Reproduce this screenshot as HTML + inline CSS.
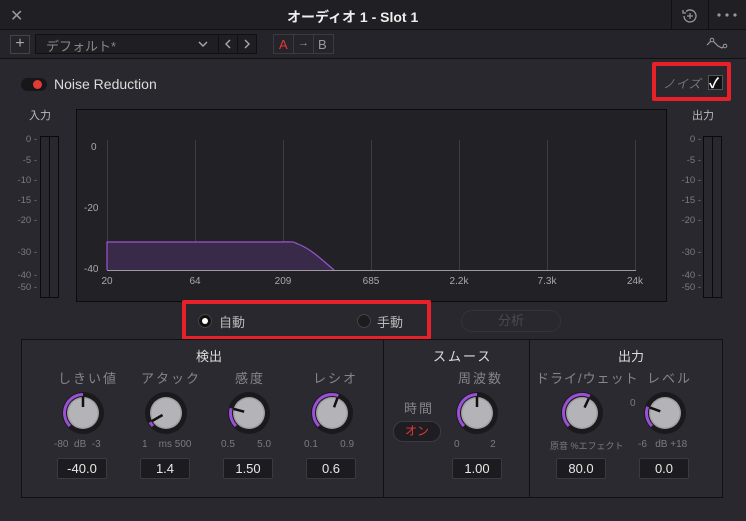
<!DOCTYPE html>
<html><head><meta charset="utf-8"><style>
*{margin:0;padding:0;box-sizing:border-box}
body{width:746px;height:521px;background:#28282e;font-family:"Liberation Sans","Noto Sans CJK JP",sans-serif;position:relative;overflow:hidden;color:#c8c8c8}
.a{position:absolute}
.t{position:absolute;white-space:nowrap}
.sm{font-size:10px;color:#7a7a80}
.vb{position:absolute;width:50px;height:21px;background:#1c1c20;border:1px solid #3a3a40;border-radius:2px;color:#e8e8e8;font-size:13px;text-align:center;line-height:19px}
.lbl{font-size:13px;color:#85858a;letter-spacing:2px}
</style></head><body>
<div class="a" style="left:0;top:0;width:746px;height:30px;background:#1f1f24;border-bottom:1px solid #111"></div>
<div class="t" style="left:10px;top:6px;font-size:16px;color:#999">✕</div>
<div class="t" style="left:287px;top:7px;font-size:14px;color:#eee;font-weight:bold">オーディオ 1 - Slot 1</div>
<div class="a" style="left:671px;top:0;width:1px;height:30px;background:#111"></div>
<div class="a" style="left:708px;top:0;width:1px;height:30px;background:#111"></div>
<svg class="a" style="left:680px;top:6px" width="20" height="20" viewBox="0 0 20 20"><path d="M4 10a6 6 0 1 0 2-4.5" fill="none" stroke="#999" stroke-width="1.3"/><path d="M3 4v3h3" fill="none" stroke="#999" stroke-width="1.3"/><path d="M10 7v6M7 10h6" stroke="#999" stroke-width="1.2"/></svg>
<svg class="a" style="left:716px;top:12px" width="22" height="6"><circle cx="3" cy="3" r="1.6" fill="#999"/><circle cx="11" cy="3" r="1.6" fill="#999"/><circle cx="19" cy="3" r="1.6" fill="#999"/></svg>
<div class="a" style="left:0;top:30px;width:746px;height:29px;background:#24242a;border-bottom:1px solid #111"></div>
<div class="a" style="left:10px;top:35px;width:20px;height:19px;border:1px solid #444;color:#aaa;font-size:16px;text-align:center;line-height:16px">+</div>
<div class="a" style="left:35px;top:34px;width:222px;height:20px;background:#1f1f23;border:1px solid #111"></div>
<div class="t" style="left:46px;top:36px;font-size:13px;color:#888">デフォルト*</div>
<svg class="a" style="left:197px;top:39px" width="12" height="10"><path d="M2 3l4 4 4-4" fill="none" stroke="#aaa" stroke-width="1.4"/></svg>
<div class="a" style="left:218px;top:34px;width:1px;height:20px;background:#111"></div>
<div class="a" style="left:237px;top:34px;width:1px;height:20px;background:#111"></div>
<svg class="a" style="left:222px;top:38px" width="12" height="12"><path d="M8 2l-4 4 4 4" fill="none" stroke="#aaa" stroke-width="1.4"/></svg>
<svg class="a" style="left:241px;top:38px" width="12" height="12"><path d="M4 2l4 4-4 4" fill="none" stroke="#aaa" stroke-width="1.4"/></svg>
<div class="a" style="left:273px;top:34px;width:61px;height:20px;border:1px solid #3a3a40"></div>
<div class="a" style="left:293px;top:34px;width:1px;height:20px;background:#3a3a40"></div>
<div class="a" style="left:313px;top:34px;width:1px;height:20px;background:#3a3a40"></div>
<div class="t" style="left:279px;top:37px;font-size:13px;color:#e53935">A</div>
<div class="t" style="left:298px;top:37px;font-size:11px;color:#999">→</div>
<div class="t" style="left:318px;top:37px;font-size:13px;color:#999">B</div>
<svg class="a" style="left:705px;top:36px" width="28" height="16"><path d="M2 9l5-5 6 6 4 2 4-4" fill="none" stroke="#999" stroke-width="1.2"/><circle cx="7" cy="4" r="1.8" fill="#24242a" stroke="#999"/><circle cx="20" cy="10" r="1.8" fill="#24242a" stroke="#999"/></svg>
<div class="a" style="left:21px;top:78px;width:26px;height:13px;border-radius:7px;background:#17171a"></div>
<div class="a" style="left:33px;top:80px;width:9px;height:9px;border-radius:50%;background:#e53935"></div>
<div class="t" style="left:54px;top:76px;font-size:14px;color:#ddd">Noise Reduction</div>
<div class="a" style="left:652px;top:62px;width:79px;height:39px;border:4px solid #e8202a;border-radius:2px"></div>
<div class="t" style="left:663px;top:75px;font-size:12px;color:#777;font-style:italic;letter-spacing:1px">ノイズ</div>
<div class="a" style="left:708px;top:75px;width:15px;height:15px;background:#111;border:1px solid #555"></div>
<div class="t" style="left:709px;top:73px;font-size:14px;color:#fff;font-weight:bold">✓</div>
<div class="t" style="left:29px;top:107px;font-size:11px;color:#bbb">入力</div>
<div class="t" style="left:692px;top:107px;font-size:11px;color:#bbb">出力</div>
<div class="a" style="left:40px;top:136px;width:19px;height:162px;border:1px solid #0a0a0a"></div>
<div class="a" style="left:49px;top:136px;width:1px;height:162px;background:#0a0a0a"></div>
<div class="a" style="left:703px;top:136px;width:19px;height:162px;border:1px solid #0a0a0a"></div>
<div class="a" style="left:712px;top:136px;width:1px;height:162px;background:#0a0a0a"></div>
<div class="a sm" style="left:0;top:130px;width:37px;text-align:right;line-height:20px;font-size:9.5px">
<div style="position:absolute;right:0;top:0">0 -</div><div style="position:absolute;right:0;top:21px">-5 -</div><div style="position:absolute;right:0;top:41px">-10 -</div><div style="position:absolute;right:0;top:61px">-15 -</div><div style="position:absolute;right:0;top:81px">-20 -</div><div style="position:absolute;right:0;top:113px">-30 -</div><div style="position:absolute;right:0;top:136px">-40 -</div><div style="position:absolute;right:0;top:148px">-50 -</div></div>
<div class="a sm" style="left:660px;top:130px;width:41px;text-align:right;line-height:20px;font-size:9.5px">
<div style="position:absolute;right:0;top:0">0 -</div><div style="position:absolute;right:0;top:21px">-5 -</div><div style="position:absolute;right:0;top:41px">-10 -</div><div style="position:absolute;right:0;top:61px">-15 -</div><div style="position:absolute;right:0;top:81px">-20 -</div><div style="position:absolute;right:0;top:113px">-30 -</div><div style="position:absolute;right:0;top:136px">-40 -</div><div style="position:absolute;right:0;top:148px">-50 -</div></div>
<svg class="a" style="left:76px;top:109px" width="591" height="193">
<rect x="0.5" y="0.5" width="590" height="192" fill="#212126" stroke="#0c0c0e"/>
<g stroke="#3c3c44" stroke-width="1"><line x1="31.5" y1="31" x2="31.5" y2="161"/><line x1="119.5" y1="31" x2="119.5" y2="161"/><line x1="207.5" y1="31" x2="207.5" y2="161"/><line x1="295.5" y1="31" x2="295.5" y2="161"/><line x1="383.5" y1="31" x2="383.5" y2="161"/><line x1="471.5" y1="31" x2="471.5" y2="161"/><line x1="559.5" y1="31" x2="559.5" y2="161"/></g>
<path d="M31 161V133H200C220 133 215 132 222 135C235 140 245 150 258 161Z" fill="#3a2a4a"/>
<path d="M31 161V133H200C220 133 215 132 222 135C235 140 245 150 258 161" fill="none" stroke="#9a55d0" stroke-width="1.2"/>
<line x1="31" y1="161.5" x2="560" y2="161.5" stroke="#9a9aa0"/>
<g font-size="10" fill="#aaa" font-family="Liberation Sans"><text x="15" y="41">0</text><text x="8" y="102">-20</text><text x="8" y="163">-40</text>
<text x="31" y="175" text-anchor="middle">20</text><text x="119" y="175" text-anchor="middle">64</text><text x="207" y="175" text-anchor="middle">209</text><text x="295" y="175" text-anchor="middle">685</text><text x="383" y="175" text-anchor="middle">2.2k</text><text x="471" y="175" text-anchor="middle">7.3k</text><text x="559" y="175" text-anchor="middle">24k</text></g>
</svg>
<div class="a" style="left:182px;top:300px;width:249px;height:40px;border:4px solid #e8202a;border-radius:2px"></div>
<div class="a" style="left:198px;top:314px;width:14px;height:14px;border-radius:50%;background:#111;border:1px solid #444"></div>
<div class="a" style="left:202px;top:318px;width:6px;height:6px;border-radius:50%;background:#fff"></div>
<div class="t" style="left:219px;top:312px;font-size:13px;color:#bbb">自動</div>
<div class="a" style="left:357px;top:314px;width:14px;height:14px;border-radius:50%;background:#1c1c1f;border:1px solid #444"></div>
<div class="t" style="left:377px;top:312px;font-size:13px;color:#bbb">手動</div>
<div class="a" style="left:461px;top:310px;width:100px;height:22px;border:1px solid #33333a;border-radius:11px;color:#4a4a50;font-size:13px;text-align:center;line-height:20px">分析</div>
<div class="a" style="left:21px;top:339px;width:702px;height:159px;border:1px solid #111;background:#2a2a30"></div>
<div class="a" style="left:383px;top:339px;width:1px;height:159px;background:#111"></div>
<div class="a" style="left:529px;top:339px;width:1px;height:159px;background:#111"></div>
<div class="t" style="left:196px;top:346px;font-size:13px;color:#ddd">検出</div>
<div class="t" style="left:433px;top:346px;font-size:13px;color:#ddd;letter-spacing:2px">スムース</div>
<div class="t" style="left:618px;top:346px;font-size:13px;color:#ddd">出力</div>
<div class="t lbl" style="left:58px;top:368px">しきい値</div>
<div class="t lbl" style="left:141px;top:368px">アタック</div>
<div class="t lbl" style="left:235px;top:368px">感度</div>
<div class="t lbl" style="left:313px;top:368px">レシオ</div>
<div class="t lbl" style="left:458px;top:368px">周波数</div>
<div class="t lbl" style="left:536px;top:368px;letter-spacing:1px">ドライ/ウェット</div>
<div class="t lbl" style="left:647px;top:368px">レベル</div>
<div class="t lbl" style="left:404px;top:398px">時間</div>
<div class="a" style="left:393px;top:421px;width:48px;height:21px;border-radius:10px;background:#1e1e22;border:1px solid #3a3a40;color:#e53935;font-size:12px;text-align:center;line-height:19px">オン</div>
<svg class="a" style="left:0;top:0" width="746" height="521">
<defs><g id="kb"><circle r="21" fill="#1a1a1d"/><circle r="16" fill="#a0a0a4"/><circle r="14.5" fill="#b4b4b8"/></g></defs>
<g transform="translate(83,413)"><use href="#kb"/><path d="M-13.08 13.08A18.5 18.5 0 0 1 0 -18.5" fill="none" stroke="#9b4fd6" stroke-width="3"/><line x1="0" y1="-6" x2="0" y2="-16" stroke="#111" stroke-width="2.5"/></g>
<g transform="translate(166,413)"><use href="#kb"/><path d="M-13.08 13.08A18.5 18.5 0 0 1 -16 9.25" fill="none" stroke="#9b4fd6" stroke-width="3"/><line x1="0" y1="-4" x2="0" y2="-16" stroke="#111" stroke-width="2.5" transform="rotate(-120)"/></g>
<g transform="translate(249,413)"><use href="#kb"/><path d="M-13.08 13.08A18.5 18.5 0 0 1 -17.9 -4.8" fill="none" stroke="#9b4fd6" stroke-width="3"/><line x1="0" y1="-5" x2="0" y2="-16" stroke="#111" stroke-width="2.5" transform="rotate(-75)"/></g>
<g transform="translate(332,413)"><use href="#kb"/><path d="M-13.08 13.08A18.5 18.5 0 0 1 6.3 -17.4" fill="none" stroke="#9b4fd6" stroke-width="3"/><line x1="0" y1="-6" x2="0" y2="-16" stroke="#111" stroke-width="2.5" transform="rotate(20)"/></g>
<g transform="translate(477,413)"><use href="#kb"/><path d="M-13.08 13.08A18.5 18.5 0 0 1 0 -18.5" fill="none" stroke="#9b4fd6" stroke-width="3"/><line x1="0" y1="-6" x2="0" y2="-16" stroke="#111" stroke-width="2.5"/></g>
<g transform="translate(582,413)"><use href="#kb"/><path d="M-13.08 13.08A18.5 18.5 0 0 1 7.8 -16.8" fill="none" stroke="#9b4fd6" stroke-width="3"/><line x1="0" y1="-6" x2="0" y2="-16" stroke="#111" stroke-width="2.5" transform="rotate(25)"/></g>
<g transform="translate(665,413)"><use href="#kb"/><path d="M-13.08 13.08A18.5 18.5 0 0 1 -17.4 -6.3" fill="none" stroke="#9b4fd6" stroke-width="3"/><line x1="0" y1="-5" x2="0" y2="-16" stroke="#111" stroke-width="2.5" transform="rotate(-70)"/></g>
</svg>
<div class="t sm" style="left:54px;top:439px;font-size:10px">-80 &nbsp;dB &nbsp;-3</div>
<div class="t sm" style="left:142px;top:439px">1 &nbsp;&nbsp;&nbsp;ms 500</div>
<div class="t sm" style="left:221px;top:439px">0.5 &nbsp;&nbsp;&nbsp;&nbsp;&nbsp;&nbsp;&nbsp;5.0</div>
<div class="t sm" style="left:304px;top:439px">0.1 &nbsp;&nbsp;&nbsp;&nbsp;&nbsp;&nbsp;&nbsp;0.9</div>
<div class="t sm" style="left:454px;top:439px">0 &nbsp;&nbsp;&nbsp;&nbsp;&nbsp;&nbsp;&nbsp;&nbsp;&nbsp;&nbsp;2</div>
<div class="t sm" style="left:550px;top:439px;font-size:9px">原音 %エフェクト</div>
<div class="t sm" style="left:638px;top:439px">-6 &nbsp;&nbsp;dB +18</div>
<div class="t sm" style="left:630px;top:398px">0</div>
<div class="vb" style="left:57px;top:458px">-40.0</div>
<div class="vb" style="left:140px;top:458px">1.4</div>
<div class="vb" style="left:223px;top:458px">1.50</div>
<div class="vb" style="left:306px;top:458px">0.6</div>
<div class="vb" style="left:452px;top:458px">1.00</div>
<div class="vb" style="left:556px;top:458px">80.0</div>
<div class="vb" style="left:639px;top:458px">0.0</div>
</body></html>
